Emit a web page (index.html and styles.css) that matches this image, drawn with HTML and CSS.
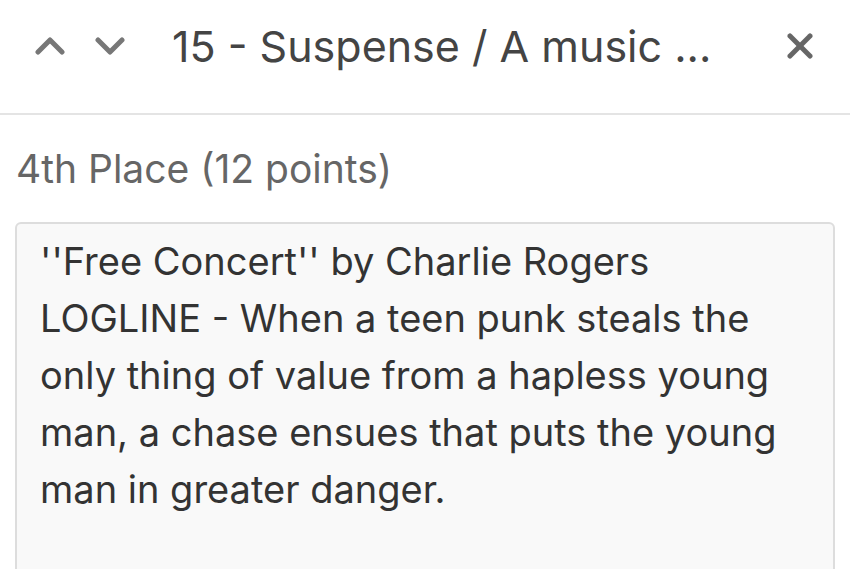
FILE: index.html
```html
<!DOCTYPE html>
<html lang="en">

<head>
    <meta charset="UTF-8">
    <meta name="viewport" content="width=device-width, initial-scale=1.0">
    <title>Entry</title>
    <link rel="stylesheet" href="styles.css">
</head>

<body>
    <div class="header">
        <div class="header-row">
            <div class="nav-arrows">
                <button class="icon-btn" aria-label="Previous">
                    <svg width="30" height="18" viewBox="0 0 30 18">
                        <polyline points="3,15 15,3 27,15" />
                    </svg>
                </button>
                <button class="icon-btn" aria-label="Next">
                    <svg width="30" height="18" viewBox="0 0 30 18">
                        <polyline points="3,3 15,15 27,3" />
                    </svg>
                </button>
            </div>
            <h1 class="title">15 - Suspense / A music ...</h1>
            <button class="icon-btn close" aria-label="Close">
                <svg width="26" height="26" viewBox="0 0 26 26">
                    <line x1="3" y1="3" x2="23" y2="23" />
                    <line x1="23" y1="3" x2="3" y2="23" />
                </svg>
            </button>
        </div>
    </div>

    <div class="content">
        <p class="place">4th Place (12 points)</p>
        <div class="entry-box">
            <p>''Free Concert'' by Charlie Rogers<br>
                LOGLINE - When a teen punk steals the only thing of value from a hapless young man, a chase ensues
                that puts the young man in greater danger.</p>
        </div>
    </div>
</body>

</html>
```

FILE: styles.css
```css
body {
    margin: 0;
    padding: 0;
    background-color: #ffffff;
    font-family: Inter, 'Noto Sans', sans-serif;
    overflow: hidden;
}

/* Top bar with arrows, title and close */
.header {
    height: 115px;
    box-sizing: border-box;
    padding: 22px 37px 0 35px;
    border-bottom: 2px solid #e4e4e4;
}

.header-row {
    display: flex;
    align-items: center;
    height: 48px;
}

.nav-arrows {
    display: flex;
    gap: 30px;
    margin-right: 47px;
}

.icon-btn {
    background: none;
    border: none;
    padding: 0;
    display: flex;
    cursor: pointer;
}

.icon-btn polyline,
.icon-btn line {
    fill: none;
    stroke: #777777;
    stroke-width: 5;
    stroke-linecap: round;
    stroke-linejoin: round;
}

.close line {
    stroke: #666666;
}

.title {
    flex: 1;
    margin: 0;
    font-size: 43px;
    line-height: 48px;
    font-weight: 400;
    color: #444444;
    white-space: nowrap;
}

.close {
    margin-left: auto;
}

.content {
    padding: 30px 15px 0 15px;
}

.place {
    margin: 0 0 29px 1px;
    font-size: 39px;
    line-height: 48px;
    color: #666666;
}

.entry-box {
    background-color: #f9f9f9;
    border: 2px solid #dddddd;
    border-radius: 6px;
    height: 400px;
    padding: 9px 30px 0 23px;
}

.entry-box p {
    margin: 0;
    font-size: 38px;
    line-height: 57px;
    color: #333333;
}
```
